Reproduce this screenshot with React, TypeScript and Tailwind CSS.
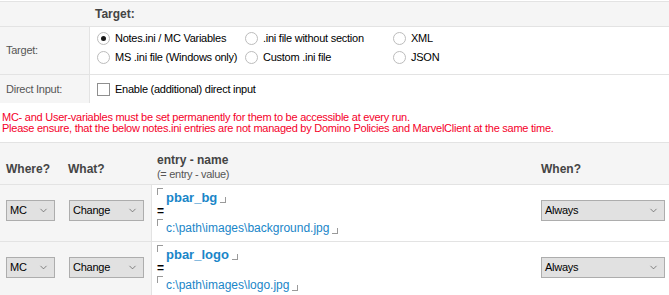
import { ChevronDown } from "lucide-react";

function Radio({ checked, label }: { checked?: boolean; label: string }) {
    return (
        <label className="flex items-center gap-[5px] h-[19px] whitespace-nowrap">
            <span className="shrink-0 w-[13px] h-[13px] rounded-full border border-[#bcbcbc] bg-white flex items-center justify-center">
                {checked && <span className="w-[5px] h-[5px] rounded-full bg-[#1a1a1a]" />}
            </span>
            <span className="text-black">{label}</span>
        </label>
    );
}

function Select({ value, width }: { value: string; width: string }) {
    return (
        <div className={`${width} h-[21px] border border-[#adadad] bg-[#e1e1e1] flex items-center justify-between pl-[3px] pr-[5px] text-black text-[11px] tracking-[-0.25px]`}>
            <span>{value}</span>
            <ChevronDown className="w-[11px] h-[11px] text-[#555]" strokeWidth={1.5} />
        </div>
    );
}

function Open() {
    return <span className="shrink-0 self-start w-[6px] h-[7px] border-l border-t border-[#9a9a9a] mr-[3px]" />;
}

function Close() {
    return <span className="shrink-0 self-end w-[6px] h-[6px] border-r border-b border-[#9a9a9a] ml-[3px] mb-[2px]" />;
}

function EntryRow({ name, value }: { name: string; value: string }) {
    return (
        <div className="flex border-b border-[#e3e3e3] h-[57px]">
            <div className="w-[152px] bg-[#f5f5f5] border-r border-[#e3e3e3] flex items-start pt-[15px] pl-[6px] gap-[14px]">
                <Select value="MC" width="w-[49px]" />
                <Select value="Change" width="w-[75px]" />
            </div>
            <div className="flex-1 pl-[5px] pt-[3px]">
                <div className="flex h-[17px]">
                    <Open />
                    <span className="self-end text-[#1a86c8] font-bold text-[13px] leading-[15px]">{name}</span>
                    <Close />
                </div>
                <div className="h-[13px] leading-[13px] text-black font-bold">=</div>
                <div className="flex h-[18px] pt-[1px]">
                    <Open />
                    <span className="self-end text-[#1a86c8] leading-[15px]">{value}</span>
                    <Close />
                </div>
            </div>
            <div className="w-[128px] flex items-start pt-[15px]">
                <Select value="Always" width="w-[124px]" />
            </div>
        </div>
    );
}

export default function App() {
    return (
        <div className="w-[669px] h-[295px] bg-white overflow-hidden text-[12px] text-[#333] font-['Liberation_Sans',Arial,sans-serif]">
            {/* Target table */}
            <div className="mt-[1px] border-t border-[#e3e3e3]">
                <div className="flex h-[25px] bg-[#f5f5f5] border-b border-[#e3e3e3]">
                    <div className="w-[90px]" />
                    <div className="pl-[5px] flex items-center font-bold text-[#444]">Target:</div>
                </div>
                <div className="flex h-[48px] border-b border-[#e3e3e3] text-[11px] tracking-[-0.25px]">
                    <div className="w-[90px] bg-[#f5f5f5] border-r border-[#e3e3e3] flex items-center pl-[6px] text-[#555]">Target:</div>
                    <div className="flex-1 pl-[7px] pt-[2px] grid content-start grid-cols-[148px_148px_1fr]">
                        <Radio checked label="Notes.ini / MC Variables" />
                        <Radio label=".ini file without section" />
                        <Radio label="XML" />
                        <Radio label="MS .ini file (Windows only)" />
                        <Radio label="Custom .ini file" />
                        <Radio label="JSON" />
                    </div>
                </div>
                <div className="flex h-[28px] text-[11px] tracking-[-0.25px]">
                    <div className="w-[90px] bg-[#f5f5f5] border-r border-[#e3e3e3] flex items-center pl-[6px] text-[#555]">Direct Input:</div>
                    <div className="flex-1 pl-[7px] flex items-center gap-[5px] text-black">
                        <span className="shrink-0 w-[13px] h-[13px] border border-[#8f8f8f] bg-white" />
                        <span>Enable (additional) direct input</span>
                    </div>
                </div>
            </div>

            {/* Warning */}
            <div className="mt-[9px] pl-[2px] text-[#f5002a] leading-[11px] text-[11px] tracking-[-0.25px]">
                <div>MC- and User-variables must be set permanently for them to be accessible at every run.</div>
                <div>Please ensure, that the below notes.ini entries are not managed by Domino Policies and MarvelClient at the same time.</div>
            </div>

            {/* Entries table */}
            <div className="mt-[8px] border-t border-[#e3e3e3]">
                <div className="flex h-[42px] bg-[#f5f5f5] border-b border-[#e3e3e3] font-bold text-[#444]">
                    <div className="w-[152px] flex items-end pb-[6px] pl-[6px]">
                        <span className="w-[62px]">Where?</span>
                        <span>What?</span>
                    </div>
                    <div className="flex-1 pl-[5px] pt-[10px] leading-[14px]">
                        <div>entry - name</div>
                        <div className="font-normal text-[#555] text-[11px] tracking-[-0.3px]">(= entry - value)</div>
                    </div>
                    <div className="w-[128px] flex items-end pb-[6px]">When?</div>
                </div>
                <EntryRow name="pbar_bg" value="c:\path\images\background.jpg" />
                <EntryRow name="pbar_logo" value="c:\path\images\logo.jpg" />
            </div>
        </div>
    );
}
